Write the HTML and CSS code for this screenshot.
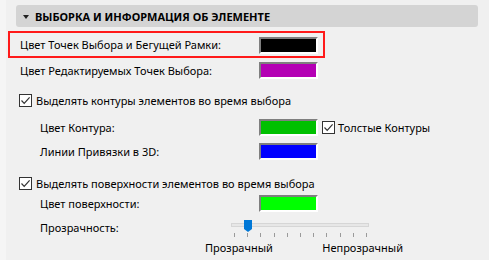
FILE: index.html
```html
<!DOCTYPE html>
<html lang="ru">
<head>
<meta charset="utf-8">
<link rel="stylesheet" href="styles.css">
</head>
<body>
<div class="panel">
  <div class="header">
    <span class="tri"></span>
    <span class="title">ВЫБОРКА И ИНФОРМАЦИЯ ОБ ЭЛЕМЕНТЕ</span>
  </div>

  <div class="row r1 highlight">
    <span class="label">Цвет Точек Выбора и Бегущей Рамки:</span>
    <span class="swatch sw-black"></span>
  </div>

  <div class="row r2">
    <span class="label">Цвет Редактируемых Точек Выбора:</span>
    <span class="swatch sw-magenta"></span>
  </div>

  <div class="row cb cb1">
    <span class="check"><svg width="11" height="11" viewBox="0 0 11 11"><path d="M1.5 5.5 L4.2 8.3 L9.6 2.4" fill="none" stroke="#333" stroke-width="1.2"/></svg></span>
    <span class="cb-label">Выделять контуры элементов во время выбора</span>
  </div>

  <div class="row sub r3">
    <span class="label">Цвет Контура:</span>
    <span class="swatch sw-green"></span>
    <span class="check small"><svg width="11" height="11" viewBox="0 0 11 11"><path d="M1.5 5.5 L4.2 8.3 L9.6 2.4" fill="none" stroke="#333" stroke-width="1.2"/></svg></span>
    <span class="cb-label">Толстые Контуры</span>
  </div>

  <div class="row sub r4">
    <span class="label">Линии Привязки в 3D:</span>
    <span class="swatch sw-blue"></span>
  </div>

  <div class="row cb cb2">
    <span class="check"><svg width="11" height="11" viewBox="0 0 11 11"><path d="M1.5 5.5 L4.2 8.3 L9.6 2.4" fill="none" stroke="#333" stroke-width="1.2"/></svg></span>
    <span class="cb-label">Выделять поверхности элементов во время выбора</span>
  </div>

  <div class="row sub r5">
    <span class="label">Цвет поверхности:</span>
    <span class="swatch sw-lime"></span>
  </div>

  <div class="row sub r6">
    <span class="trans-label">Прозрачность:</span>
    <div class="slider">
      <div class="track-area">
        <div class="track"></div>
        <div class="thumb"><svg width="8" height="12" viewBox="0 0 8 12"><path d="M0 0 H8 V9 L4 12 L0 9 Z" fill="#0078d7"/></svg></div>
      </div>
      <div class="ticks">
        <i></i><i></i><i></i><i></i><i></i><i></i><i></i><i></i><i></i><i></i><i></i>
      </div>
      <div class="ends">
        <span>Прозрачный</span>
        <span>Непрозрачный</span>
      </div>
    </div>
  </div>
</div>
</body>
</html>
```

FILE: styles.css
```css
* { box-sizing: border-box; }
html, body {
  margin: 0;
  padding: 0;
  background: #f0f0f0;
  width: 489px;
  height: 260px;
  overflow: hidden;
}
body {
  font-family: "Noto Sans", "Open Sans", sans-serif;
  font-size: 11px;
  color: #000;
}
.panel {
  padding-top: 5px;
  border-left: 6px solid #f5f5f5;
  height: 260px;
}
.header {
  margin-left: 10px;
  width: 462px;
  height: 22px;
  background: #d4d4d4;
  border-radius: 3px;
  display: flex;
  align-items: center;
  padding-left: 7px;
}
.tri {
  width: 0;
  height: 0;
  border-left: 3.5px solid transparent;
  border-right: 3.5px solid transparent;
  border-top: 4px solid #222;
  margin-right: 6px;
  margin-top: 1px;
}
.title {
  font-weight: bold;
  font-size: 11px;
}
.row {
  display: flex;
  align-items: center;
  position: relative;
}
.label {
  white-space: nowrap;
}
.highlight {
  margin-top: 4px;
  margin-left: 2px;
  width: 317px;
  height: 27px;
  border: 2px solid #ff1a1a;
  padding-left: 10px;
}
.r1 .label { width: 239px; }
.r2 { height: 25px; padding-left: 14px; }
.r2 .label { width: 239px; }
.swatch {
  display: block;
  width: 59px;
  height: 17px;
  border-top: 2px solid #7f7f7f;
  border-left: 2px solid #7f7f7f;
  border-right: 2px solid #fff;
  border-bottom: 2px solid #fff;
  flex: none;
}
.r1 .swatch { margin-top: 2px; }
.sw-black { background: #000; }
.sw-magenta { background: #b400b4; }
.sw-green { background: #00c000; }
.sw-blue { background: #0000ff; }
.sw-lime { background: #00ff00; }

.cb { padding-left: 13px; height: 24px; }
.cb1 { margin-top: 5px; }
.cb2 { margin-top: 9px; height: 22px; }
.check {
  width: 13px;
  height: 13px;
  border: 1px solid #333;
  background: #fff;
  display: flex;
  align-items: center;
  justify-content: center;
  flex: none;
  margin-right: 4px;
}
.check svg { display: block; }
.sub { padding-left: 34px; }
.sub .label { width: 219px; }
.r3 { margin-top: 3px; height: 25px; }
.r3 .check { margin-left: 4px; margin-right: 3px; }
.r4 { height: 23px; }
.r5 { height: 19px; }
.r6 { align-items: flex-start; margin-top: 4px; }
.trans-label { width: 165px; padding-top: 3px; white-space: nowrap; flex: none; }
.slider { width: 198px; flex: none; }
.track-area {
  position: relative;
  height: 14px;
  margin-left: 26px;
  width: 138px;
}
.track {
  position: absolute;
  left: 0; right: 0;
  top: 6px;
  height: 4px;
  background: #e7e7e7;
  border: 1px solid #d6d6d6;
}
.thumb {
  position: absolute;
  left: 13px;
  top: 3px;
}
.thumb svg { display: block; }
.ticks {
  display: flex;
  justify-content: space-between;
  margin-left: 29px;
  width: 133px;
  margin-top: 2px;
  height: 4px;
}
.ticks i {
  display: block;
  width: 1px;
  height: 4px;
  background: #9a9a9a;
}
.ends {
  display: flex;
  justify-content: space-between;
  margin-top: 3px;
  white-space: nowrap;
}
```
